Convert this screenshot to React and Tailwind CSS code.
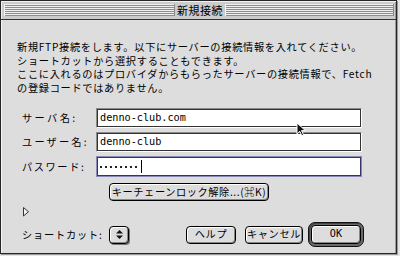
import React from "react";

const jp = "font-['Noto_Sans_CJK_JP',sans-serif]";
const mono = "font-['DejaVu_Sans_Mono','Noto_Sans_CJK_JP',monospace]";

function Stripes({ w }) {
  const rows = [0, 1, 2, 3, 4, 5];
  return (
    <div className={`${w} h-[12px] flex flex-col border-l border-l-[#f4f4f4] border-r border-r-[#8a8a8a]`}>
      {rows.map((i) => (
        <div key={i} className="h-[2px] flex flex-col">
          <div className="h-px bg-[#f0f0f0]" />
          <div className="h-px bg-[#8e8e8e]" />
        </div>
      ))}
    </div>
  );
}

function Field({ children, focused }) {
  return (
    <div
      className={
        focused
          ? "w-[266px] h-[21px] border border-[#8a8ab8] flex"
          : "w-[266px] h-[20px] border border-t-[#8a8a8a] border-l-[#8a8a8a] border-b-white border-r-white flex"
      }
    >
      <div
        className={
          focused
            ? "flex-1 border border-[#34346a] bg-white flex items-center pl-[2px]"
            : "flex-1 border border-[#333333] bg-white flex items-center pl-[2px]"
        }
      >
        {children}
      </div>
    </div>
  );
}

function Btn({ w, children }) {
  return (
    <div
      className={`${w} h-[18px] rounded-[4px] border border-black bg-[#dddddd] shadow-[inset_1px_1px_0_#ffffff,inset_-1px_-1px_0_#888888] flex items-center justify-center text-[10.2px] tracking-[0.6px] leading-none whitespace-nowrap ${jp}`}
    >
      {children}
    </div>
  );
}

export default function App() {
  return (
    <div className={`w-[400px] h-[256px] bg-[#e4e4e4] relative overflow-hidden text-black ${jp}`}>
      <div className="w-[397px] h-[254px] border border-[#262626] bg-[#dddddd] flex flex-col shadow-[1px_1px_0_#9a9a9a]">
        {/* title bar */}
        <div className="h-[18px] bg-[#cccccc] flex items-center shadow-[inset_1px_1px_0_#f2f2f2,inset_-1px_0_0_#999999]">
          <div className="w-[3px]" />
          <Stripes w="w-[171px]" />
          <div className="w-[50px] text-center text-[11px] tracking-[0.5px] leading-[18px]">新規接続</div>
          <Stripes w="w-[169px]" />
        </div>
        <div className="h-px bg-[#333333]" />

        {/* content */}
        <div className="flex-1 flex flex-col border-l border-l-[#f4f4f4] border-r border-r-[#9a9a9a]">
          <div className="mt-[20px] pl-[15px] text-[10.2px] tracking-[0.7px] leading-[13.5px] whitespace-nowrap">
            <div>新規FTP接続をします。以下にサーバーの接続情報を入れてください。</div>
            <div>ショートカットから選択することもできます。</div>
            <div>ここに入れるのはプロバイダからもらったサーバーの接続情報で、Fetch</div>
            <div>の登録コードではありません。</div>
          </div>

          <div className="mt-[14px] flex flex-col gap-[4px]">
            <div className="flex items-center pl-[20px]">
              <div className="w-[74px] text-[10.2px] tracking-[2.4px] whitespace-nowrap">サーバ名:</div>
              <Field>
                <span className={`${mono} text-[10.2px]`}>denno-club.com</span>
              </Field>
            </div>
            <div className="flex items-center pl-[20px]">
              <div className="w-[74px] text-[10.2px] tracking-[2.2px] whitespace-nowrap">ユーザー名:</div>
              <Field>
                <span className={`${mono} text-[10.2px]`}>denno-club</span>
              </Field>
            </div>
            <div className="flex items-center pl-[20px]">
              <div className="w-[74px] text-[10.2px] tracking-[1.6px] whitespace-nowrap">パスワード:</div>
              <Field focused>
                <div className="flex items-center gap-[3px]">
                  {[0, 1, 2, 3, 4, 5, 6, 7].map((i) => (
                    <div key={i} className="w-[2px] h-[2px] bg-[#222222]" />
                  ))}
                </div>
                <div className="ml-[4px] w-px h-[13px] bg-black" />
              </Field>
            </div>
          </div>

          <div className="mt-[6px] ml-[107px]">
            <Btn w="w-[160px]">キーチェーンロック解除...(⌘K)</Btn>
          </div>

          <div className="mt-[6px] ml-[21px] h-[9px]">
            <svg width="7" height="10" viewBox="0 0 7 10">
              <polygon points="0.5,0.5 5.5,4.75 0.5,9" fill="#f2f2f2" stroke="#333333" strokeWidth="1" />
            </svg>
          </div>

          <div className="mt-[6px] h-[25px] flex items-center pl-[20px]">
            <div className="w-[87px] text-[10.2px] tracking-[0.8px] whitespace-nowrap">ショートカット:</div>
            <div className="w-[20px] h-[18px] rounded-[4px] border border-black bg-[#dddddd] shadow-[inset_1px_1px_0_#ffffff,inset_-1px_-1px_0_#888888,1px_1px_0_#777777] flex items-center justify-center">
              <svg width="7" height="9" viewBox="0 0 7 9">
                <polygon points="3.5,0 7,3.5 0,3.5" fill="#111111" />
                <polygon points="0,5.5 7,5.5 3.5,9" fill="#111111" />
              </svg>
            </div>
            <div className="ml-[57px]">
              <Btn w="w-[50px]">ヘルプ</Btn>
            </div>
            <div className="ml-[9px]">
              <Btn w="w-[58px]">キャンセル</Btn>
            </div>
            <div className="ml-[5px] w-[56px] h-[25px] rounded-[7px] border border-[#111111] bg-[#6a6a6a] p-[2px] flex shadow-[inset_1px_1px_0_#444444]">
              <div className={`flex-1 rounded-[4px] border border-black bg-[#dddddd] shadow-[inset_1px_1px_0_#ffffff,inset_-1px_-1px_0_#888888] flex items-center justify-center text-[10.2px] leading-none ${mono}`}>
                OK
              </div>
            </div>
          </div>
        </div>
      </div>

      {/* mouse pointer */}
      <svg className="absolute left-[296px] top-[122px]" width="11" height="16" viewBox="0 0 11 16">
        <path d="M1,1 L1,12 L3.8,9.3 L5.8,13.8 L7.6,13 L5.6,8.6 L9.4,8.6 Z" fill="#111111" stroke="#ffffff" strokeWidth="1" strokeLinejoin="miter" />
      </svg>
    </div>
  );
}
